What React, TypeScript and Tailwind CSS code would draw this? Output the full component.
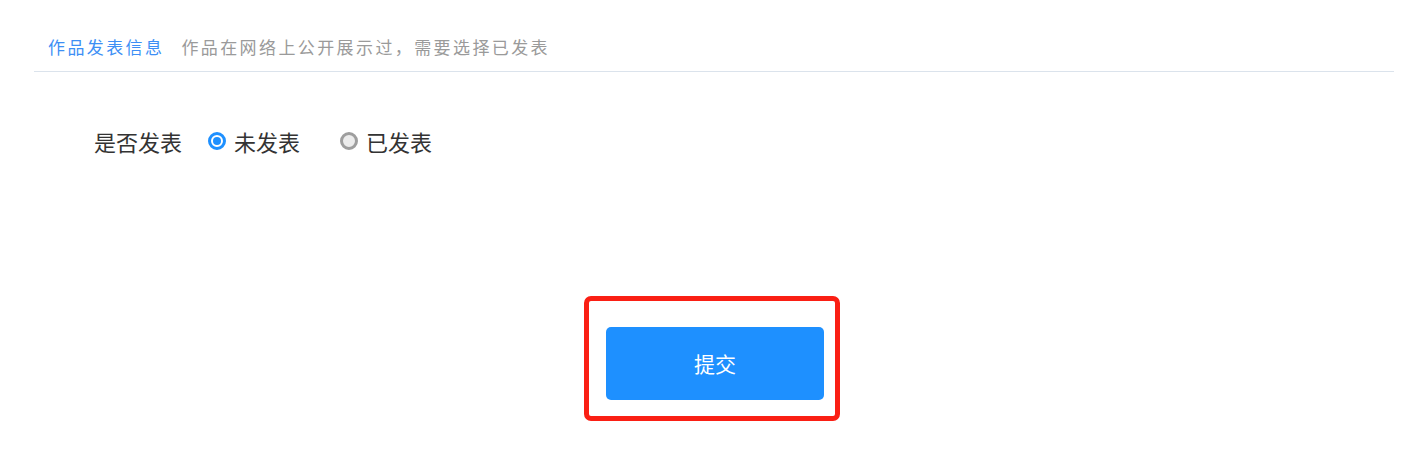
import React from "react";

const font = { fontFamily: '"Noto Sans CJK SC", "Noto Sans", sans-serif' };

export default function App() {
  return (
    <div className="w-[1425px] h-[473px] bg-white" style={font}>
      <div className="ml-[34px] mr-[31px] pt-[35px] pb-[12px] pl-[14px] border-b border-[#dbe3ec] flex items-center text-[17px] leading-[24px]">
        <span className="text-[#3d8ff5] tracking-[2.4px]">作品发表信息</span>
        <span className="ml-[17px] text-[#9a9a9a] tracking-[2.4px]">作品在网络上公开展示过，需要选择已发表</span>
      </div>
      <div className="mt-[55px] ml-[94px] flex items-center text-[22px] leading-[28px] text-[#333333]">
        <span>是否发表</span>
        <label className="ml-[26px] flex items-center">
          <span className="w-[18px] h-[18px] rounded-full border-[3px] border-[#1e90ff] flex items-center justify-center bg-white">
            <span className="w-[8px] h-[8px] rounded-full bg-[#1e90ff]" />
          </span>
          <span className="ml-[8px]">未发表</span>
        </label>
        <label className="ml-[40px] flex items-center">
          <span className="w-[18px] h-[18px] rounded-full border-[3px] border-[#9e9e9e] bg-[#ececec]" />
          <span className="ml-[8px]">已发表</span>
        </label>
      </div>
      <div className="mt-[141px] flex justify-center">
        <div className="ml-[-1px] border-[5px] border-[#fa1f14] rounded-[7px] pt-[26px] pb-[16px] pl-[17px] pr-[11px]">
          <button className="w-[218px] h-[73px] rounded-[5px] bg-[#1e90ff] text-white text-[21px] leading-[28px] pb-[1px] flex items-center justify-center">
            提交
          </button>
        </div>
      </div>
    </div>
  );
}
